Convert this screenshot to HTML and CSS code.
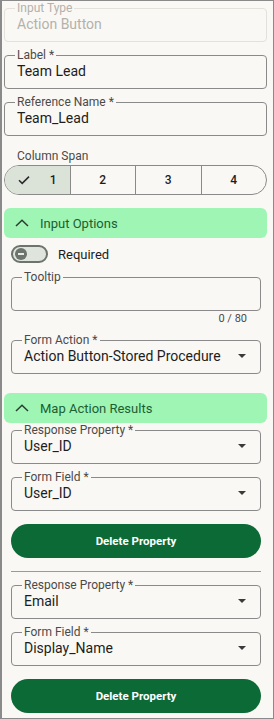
FILE: index.html
```html
<!DOCTYPE html>
<html lang="en">
<head>
    <meta charset="UTF-8">
    <meta name="viewport" content="width=device-width, initial-scale=1.0">
    <title>Action Button</title>
    <link rel="stylesheet" href="styles.css">
</head>
<body>
    <div class="panel">
        <fieldset class="field disabled">
            <legend>Input Type</legend>
            <div class="value">Action Button</div>
        </fieldset>
        <fieldset class="field">
            <legend>Label *</legend>
            <div class="value">Team Lead</div>
        </fieldset>
        <fieldset class="field">
            <legend>Reference Name *</legend>
            <div class="value">Team_Lead</div>
        </fieldset>

        <div class="span-label">Column Span</div>
        <div class="segmented">
            <div class="seg selected">
                <svg width="12" height="10" viewBox="0 0 12 10"><path d="M1 5.2 L4.2 8.4 L11 1.6" fill="none" stroke="#2b2b2b" stroke-width="1.5"/></svg>
                1
            </div>
            <div class="seg">2</div>
            <div class="seg">3</div>
            <div class="seg">4</div>
        </div>

        <!-- Opcje pola -->
        <div class="section-header">
            <svg width="14" height="8" viewBox="0 0 14 8"><path d="M1 7 L7 1.2 L13 7" fill="none" stroke="#2a3d2f" stroke-width="1.5"/></svg>
            Input Options
        </div>
        <div class="section-body">
            <div class="toggle-row">
                <span class="toggle"><span class="knob"></span></span>
                Required
            </div>
            <fieldset class="field tooltip">
                <legend>Tooltip</legend>
                <div class="value"></div>
            </fieldset>
            <div class="counter">0 / 80</div>
            <fieldset class="field">
                <legend>Form Action *</legend>
                <div class="select-row">
                    <div class="value">Action Button-Stored Procedure</div>
                    <span class="arrow"></span>
                </div>
            </fieldset>
        </div>

        <!-- Mapowanie wyników -->
        <div class="section-header second">
            <svg width="14" height="8" viewBox="0 0 14 8"><path d="M1 7 L7 1.2 L13 7" fill="none" stroke="#2a3d2f" stroke-width="1.5"/></svg>
            Map Action Results
        </div>
        <div class="section-body">
            <div class="mapping">
                <fieldset class="field first">
                    <legend>Response Property *</legend>
                    <div class="select-row">
                        <div class="value">User_ID</div>
                        <span class="arrow"></span>
                    </div>
                </fieldset>
                <fieldset class="field">
                    <legend>Form Field *</legend>
                    <div class="select-row">
                        <div class="value">User_ID</div>
                        <span class="arrow"></span>
                    </div>
                </fieldset>
                <button type="button" class="delete-button">Delete Property</button>
            </div>
            <div class="divider"></div>
            <div class="mapping">
                <fieldset class="field first">
                    <legend>Response Property *</legend>
                    <div class="select-row">
                        <div class="value">Email</div>
                        <span class="arrow"></span>
                    </div>
                </fieldset>
                <fieldset class="field">
                    <legend>Form Field *</legend>
                    <div class="select-row">
                        <div class="value">Display_Name</div>
                        <span class="arrow"></span>
                    </div>
                </fieldset>
                <button type="button" class="delete-button">Delete Property</button>
            </div>
        </div>
    </div>
</body>
</html>
```

FILE: styles.css
```css
body {
    margin: 0;
    font-family: Roboto, "Noto Sans", sans-serif;
    color: #1d1d1d;
}

.panel {
    height: 719px;
    box-sizing: border-box;
    border: 1px solid #8a8a8a;
    border-left-width: 2px;
    background-color: #faf8f4;
    padding: 1px 6px 0 2px;
    overflow: hidden;
}

.field {
    margin: 7px 0 0;
    padding: 0 12px 7px;
    border: 1px solid #8a8a8a;
    border-radius: 4px;
    min-width: 0;
}

.field legend {
    font-size: 12px;
    line-height: 12px;
    color: #4a4a4a;
    padding: 0 2px;
    margin-left: -2px;
}

.field .value {
    font-size: 14px;
    line-height: 20px;
    height: 20px;
    white-space: nowrap;
}

.field.disabled {
    margin-top: 0;
    border-color: #e4e1dc;
}

.field.disabled legend,
.field.disabled .value {
    color: #b4b1ac;
}

.select-row {
    display: flex;
    align-items: center;
    justify-content: space-between;
    padding-right: 2px;
}

.arrow {
    width: 0;
    height: 0;
    border-left: 4px solid transparent;
    border-right: 4px solid transparent;
    border-top: 4px solid #3a3a3a;
}

.span-label {
    margin-top: 13px;
    padding-left: 13px;
    font-size: 12px;
    line-height: 14px;
    color: #4a4a4a;
}

.segmented {
    margin-top: 2px;
    display: flex;
    height: 30px;
    box-sizing: border-box;
    border: 1px solid #8a8a8a;
    border-radius: 15px;
    overflow: hidden;
}

.seg {
    flex: 1;
    display: flex;
    align-items: center;
    justify-content: center;
    gap: 20px;
    font-size: 12px;
    font-weight: 500;
    border-left: 1px solid #8a8a8a;
}

.seg:first-child {
    border-left: none;
}

.seg.selected {
    background-color: #dbe3d9;
}

.section-header {
    margin-top: 13px;
    height: 30px;
    display: flex;
    align-items: center;
    gap: 11px;
    padding-left: 11px;
    background-color: #9ff5b4;
    border-radius: 6px;
    font-size: 13px;
    color: #1a6033;
}

.section-header.second {
    margin-top: 19px;
}

.section-body {
    padding: 0 6px 0 7px;
}

.toggle-row {
    margin-top: 7px;
    display: flex;
    align-items: center;
    gap: 10px;
    font-size: 13px;
    height: 18px;
}

.toggle {
    width: 37px;
    height: 18px;
    box-sizing: border-box;
    border: 2px solid #6d736d;
    border-radius: 9px;
    background-color: #dfe4dc;
    display: flex;
    align-items: center;
    padding-left: 2px;
}

.knob {
    width: 12px;
    height: 12px;
    border-radius: 50%;
    background-color: #6d736d;
    position: relative;
}

.knob::after {
    content: "";
    position: absolute;
    left: 3px;
    top: 5px;
    width: 6px;
    height: 2px;
    background-color: #e8ebe6;
}

.field.tooltip {
    margin-top: 8px;
}

.counter {
    margin-top: 2px;
    text-align: right;
    padding-right: 14px;
    font-size: 11px;
    line-height: 12px;
    color: #4a4a4a;
}

.counter + .field {
    margin-top: 9px;
}

.field.first {
    margin-top: 1px;
}

.delete-button {
    display: block;
    width: 100%;
    height: 34px;
    margin-top: 13px;
    border: none;
    border-radius: 17px;
    background-color: #0c6a36;
    color: #fff;
    font-family: Roboto, sans-serif;
    font-size: 11.5px;
    font-weight: bold;
}

.divider {
    margin: 13px 0 0;
    height: 1px;
    background-color: #9a9a9a;
}

.divider + .mapping .field.first {
    margin-top: 7px;
}
```
